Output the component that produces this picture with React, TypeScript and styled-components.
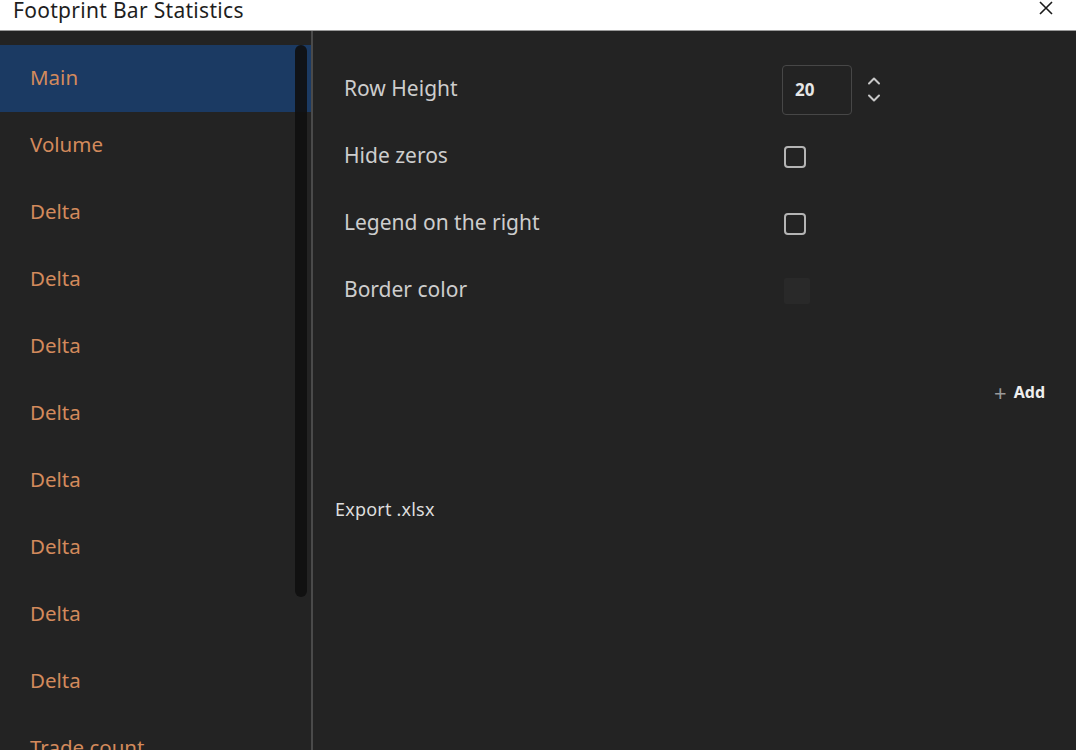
import React from 'react';
import styled, { createGlobalStyle } from 'styled-components';

const GlobalStyle = createGlobalStyle`
  html, body {
    margin: 0;
    padding: 0;
    background: #232323;
  }
  body {
    font-family: "Noto Sans", "Open Sans", sans-serif;
  }
`;

const Window = styled.div`
  width: 1076px;
  height: 750px;
  display: flex;
  flex-direction: column;
  overflow: hidden;
  background: #232323;
`;

const TitleBar = styled.div`
  height: 30px;
  flex: none;
  background: #ffffff;
  border-bottom: 1px solid #9a9a9a;
  display: flex;
  align-items: center;
  justify-content: space-between;
  padding: 0 20px 0 13px;
`;

const Title = styled.span`
  font-size: 21px;
  letter-spacing: 0.3px;
  color: #1e1e1e;
  margin-top: -10px;
`;

const CloseButton = styled.button`
  border: none;
  background: none;
  padding: 0;
  width: 20px;
  height: 20px;
  margin-top: -14px;
  display: flex;
  align-items: center;
  justify-content: center;
  cursor: pointer;
`;

const Body = styled.div`
  flex: 1;
  display: flex;
  min-height: 0;
`;

const Sidebar = styled.div`
  position: relative;
  width: 311px;
  flex: none;
  padding-top: 14px;
  border-right: 2px solid #4a4a4a;
  overflow: hidden;
`;

const NavItem = styled.div<{ $active?: boolean }>`
  height: 67px;
  display: flex;
  align-items: center;
  padding-left: 30px;
  padding-bottom: 4px;
  box-sizing: border-box;
  font-size: 20.5px;
  color: #d38a5c;
  background: ${(p) => (p.$active ? '#1b3a63' : 'transparent')};
`;

const ScrollThumb = styled.div`
  position: absolute;
  top: 14px;
  right: 4px;
  width: 12px;
  height: 552px;
  border-radius: 6px;
  background: rgba(16, 16, 16, 0.9);
`;

const Content = styled.div`
  flex: 1;
  padding: 25px 0 0 31px;
  display: flex;
  flex-direction: column;
`;

const SettingsGrid = styled.div`
  display: grid;
  grid-template-columns: 438px 1fr;
  grid-auto-rows: 67px;
  align-items: center;
`;

const Label = styled.span`
  font-size: 21px;
  color: #cdcdcd;
  padding-bottom: 3px;
`;

const SpinWrap = styled.div`
  display: flex;
  align-items: center;
  gap: 14px;
`;

const NumberBox = styled.div`
  width: 70px;
  height: 50px;
  box-sizing: border-box;
  border: 1px solid #474747;
  border-radius: 4px;
  display: flex;
  align-items: center;
  padding-left: 12px;
  font-size: 17px;
  font-weight: bold;
  color: #e6e6e6;
`;

const Chevrons = styled.div`
  display: flex;
  flex-direction: column;
  gap: 9px;
`;

const Checkbox = styled.div`
  width: 22px;
  height: 22px;
  box-sizing: border-box;
  margin-left: 2px;
  border: 2px solid #b4b4b4;
  border-radius: 4px;
`;

const Swatch = styled.div`
  width: 26px;
  height: 26px;
  margin-left: 2px;
  border-radius: 2px;
  background: #292929;
`;

const AddRow = styled.div`
  display: flex;
  justify-content: flex-end;
  padding-right: 31px;
  margin-top: 57px;
`;

const AddButton = styled.button`
  border: none;
  background: none;
  padding: 0;
  display: flex;
  align-items: center;
  gap: 7px;
  font-family: inherit;
  font-size: 16px;
  font-weight: bold;
  color: #eeeeee;
  cursor: pointer;
`;

const Plus = styled.span`
  font-size: 22px;
  font-weight: normal;
  color: #9a9a9a;
  line-height: 1;
`;

const ExportLink = styled.span`
  margin: 94px 0 0 -9px;
  font-size: 18px;
  letter-spacing: 0.2px;
  color: #dddddd;
`;

const navItems = ['Main', 'Volume', 'Delta', 'Delta', 'Delta', 'Delta', 'Delta', 'Delta', 'Delta', 'Delta', 'Trade count'];

const Chevron = ({ up }: { up?: boolean }) => (
  <svg width="16" height="9" viewBox="0 0 16 9">
    <path
      d={up ? 'M3 7.5 L8 2.5 L13 7.5' : 'M3 1.5 L8 6.5 L13 1.5'}
      fill="none"
      stroke="#c8c8c8"
      strokeWidth="2"
      strokeLinecap="round"
      strokeLinejoin="round"
    />
  </svg>
);

const App = () => {
  return (
    <>
      <GlobalStyle />
      <Window>
        <TitleBar>
          <Title>Footprint Bar Statistics</Title>
          <CloseButton aria-label="close">
            <svg width="16" height="16" viewBox="0 0 16 16">
              <path d="M2 2 L14 14 M14 2 L2 14" stroke="#1a1a1a" strokeWidth="1.6" />
            </svg>
          </CloseButton>
        </TitleBar>
        <Body>
          <Sidebar>
            {navItems.map((name, i) => (
              <NavItem key={i} $active={i === 0}>
                {name}
              </NavItem>
            ))}
            <ScrollThumb />
          </Sidebar>
          <Content>
            <SettingsGrid>
              <Label>Row Height</Label>
              <SpinWrap>
                <NumberBox>20</NumberBox>
                <Chevrons>
                  <Chevron up />
                  <Chevron />
                </Chevrons>
              </SpinWrap>
              <Label>Hide zeros</Label>
              <Checkbox />
              <Label>Legend on the right</Label>
              <Checkbox />
              <Label>Border color</Label>
              <Swatch />
            </SettingsGrid>
            <AddRow>
              <AddButton>
                <Plus>+</Plus>
                Add
              </AddButton>
            </AddRow>
            <ExportLink>Export .xlsx</ExportLink>
          </Content>
        </Body>
      </Window>
    </>
  );
};

export default App;
